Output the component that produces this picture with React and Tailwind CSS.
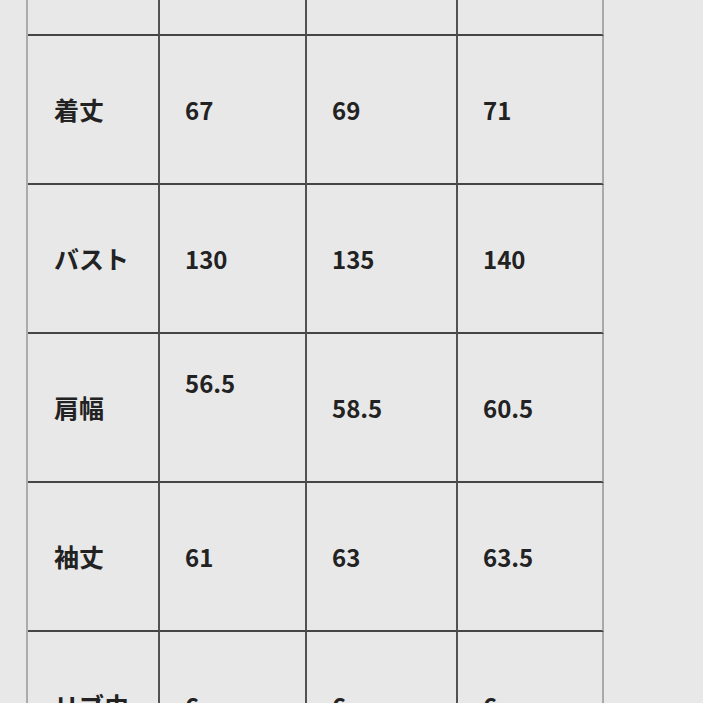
import React from "react";

const rows = [
  { label: "着丈", values: ["67", "69", "71"] },
  { label: "バスト", values: ["130", "135", "140"] },
  { label: "肩幅", values: ["56.5", "58.5", "60.5"], raised: 0 },
  { label: "袖丈", values: ["61", "63", "63.5"] },
  { label: "リブ巾", values: ["6", "6", "6"] },
];

const widths = ["w-[132px]", "w-[147px]", "w-[151px]", "w-[146px]"];

const Cell = ({ i, children, raised }) => (
  <div
    className={`${widths[i]} shrink-0 flex items-center border-b-2 border-b-[#454545] ${
      i === 3 ? "border-r-2 border-r-[#a9a9a9]" : "border-r-2 border-r-[#525252]"
    } ${i === 0 ? "pl-[26px] text-[25px]" : "pl-[25px]"}`}
  >
    <span className={raised ? "pb-[50px]" : ""}>{children}</span>
  </div>
);

const App = () => {
  return (
    <div
      className="w-[703px] h-[703px] overflow-hidden bg-[#e8e8e8] text-[#222] text-[24px] font-semibold"
      style={{ fontFamily: '"Noto Sans CJK JP", "Noto Sans", sans-serif' }}
    >
      <div className="ml-[26px] flex flex-col border-l-2 border-l-[#ababab] w-max">
        <div className="flex h-[36px]">
          {[0, 1, 2, 3].map((i) => (
            <Cell key={i} i={i} />
          ))}
        </div>
        {rows.map((row) => (
          <div key={row.label} className="flex h-[149px]">
            <Cell i={0}>{row.label}</Cell>
            {row.values.map((v, j) => (
              <Cell key={j} i={j + 1} raised={row.raised === j}>
                {v}
              </Cell>
            ))}
          </div>
        ))}
      </div>
    </div>
  );
};

export default App;
